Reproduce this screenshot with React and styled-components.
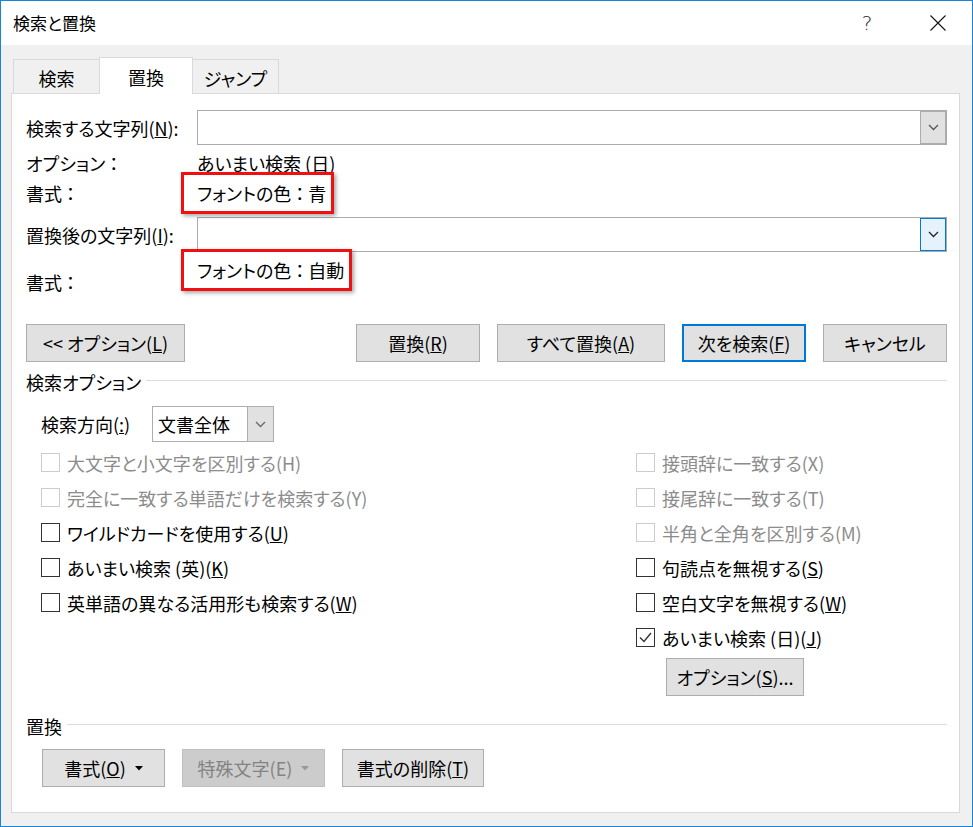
import React from "react";
import styled, { createGlobalStyle } from "styled-components";

const GlobalStyle = createGlobalStyle`
  html, body {
    margin: 0;
    padding: 0;
    background: #ffffff;
  }
  body {
    font-family: "Noto Sans CJK JP", "Noto Sans", sans-serif;
    font-size: 18px;
    font-feature-settings: "palt";
    color: #000;
  }
  * {
    box-sizing: border-box;
  }
`;

const Window = styled.div`
  width: 973px;
  height: 827px;
  border: 1px solid #1883d7;
  background: #f0f0f0;
  display: flex;
  flex-direction: column;
`;

const TitleBar = styled.div`
  height: 44px;
  flex-shrink: 0;
  background: #fff;
  display: flex;
  align-items: center;
  padding-left: 12px;
`;

const Title = styled.span`
  font-size: 17px;
  line-height: 24px;
`;

const TitleControls = styled.div`
  margin-left: auto;
  display: flex;
  align-items: center;
  gap: 25px;
  padding-right: 11px;
`;

const TitleButton = styled.div`
  width: 46px;
  height: 44px;
  display: flex;
  align-items: center;
  justify-content: center;
  color: #222;
  font-family: "DejaVu Sans", sans-serif;
  font-size: 20px;
  font-weight: 300;
`;

const TabRow = styled.div`
  height: 49px;
  flex-shrink: 0;
  display: flex;
  align-items: flex-end;
  padding: 12px 0 0 12px;
  margin-bottom: -1px;
  position: relative;
  z-index: 1;
`;

const Tab = styled.div`
  height: ${(p) => (p.$active ? 37 : 34)}px;
  width: ${(p) => p.$w}px;
  margin-bottom: ${(p) => (p.$active ? 0 : 1)}px;
  background: ${(p) => (p.$active ? "#fff" : "#f0f0f0")};
  border-top: 1px solid #d9d9d9;
  border-left: ${(p) => (p.$noLeft ? "none" : "1px solid #d9d9d9")};
  border-right: ${(p) => (p.$noRight ? "none" : "1px solid #d9d9d9")};
  display: flex;
  align-items: center;
  justify-content: center;
  padding-top: 2px;
  line-height: 24px;
`;

const Panel = styled.div`
  flex: 1;
  margin: 0 12px 13px 10px;
  background: #fff;
  border: 1px solid #d9d9d9;
  padding: 0 12px 0 14px;
  display: flex;
  flex-direction: column;
`;

/* full-width colon, a little tighter than the default em box */
const Colon = styled.span`
  padding: 0 4px;
`;

const ComboRow = styled.div`
  display: flex;
  align-items: center;
  height: 35px;
  margin-top: ${(p) => p.$mt}px;
`;

const Label = styled.div`
  width: 171px;
  flex-shrink: 0;
  line-height: 24px;
  white-space: nowrap;
  margin-top: ${(p) => p.$mt || 0}px;
`;

const Combo = styled.div`
  flex: 1;
  height: 35px;
  border: 1px solid #ababab;
  background: #fff;
  display: flex;
  justify-content: flex-end;
`;

const DropButton = styled.div`
  width: 26px;
  height: 100%;
  border: 1px solid ${(p) => (p.$focused ? "#0078d7" : "#adadad")};
  background: ${(p) => (p.$focused ? "#e5f1fb" : "#e1e1e1")};
  display: flex;
  align-items: center;
  justify-content: center;
`;

const InfoRow = styled.div`
  display: flex;
  align-items: ${(p) => (p.$top ? "flex-start" : "center")};
  height: ${(p) => p.$h || 30}px;
  margin-top: ${(p) => p.$mt || 0}px;
`;

const Value = styled.div`
  line-height: 24px;
  white-space: nowrap;
  margin-top: ${(p) => p.$mt || 0}px;
`;

const Highlight = styled.span`
  display: inline-block;
  position: relative;
  line-height: 24px;

  &::after {
    content: "";
    position: absolute;
    left: -16px;
    right: -8px;
    top: -9px;
    bottom: -9px;
    border: 3px solid #f01010;
    box-shadow: 2px 2px 4px rgba(0, 0, 0, 0.35);
  }
`;

const ButtonRow = styled.div`
  display: flex;
  justify-content: space-between;
  align-items: center;
  margin-top: ${(p) => p.$mt}px;
  padding-left: ${(p) => p.$indent || 0}px;
`;

const ButtonGroup = styled.div`
  display: flex;
  gap: 17px;
`;

const Button = styled.button`
  width: ${(p) => p.$w}px;
  height: 38px;
  padding: 0;
  margin: 0;
  border: ${(p) =>
    p.$primary
      ? "2px solid #0078d7"
      : p.$disabled
      ? "1px solid #bfbfbf"
      : "1px solid #adadad"};
  background: ${(p) => (p.$disabled ? "#cccccc" : "#e1e1e1")};
  color: ${(p) => (p.$disabled ? "#838383" : "#000")};
  font: inherit;
  font-size: 18px;
  line-height: 24px;
  display: flex;
  align-items: center;
  justify-content: center;
  gap: 9px;
  white-space: nowrap;
`;

const SectionHeader = styled.div`
  display: flex;
  align-items: center;
  gap: 5px;
  height: 24px;
  margin-top: ${(p) => p.$mt}px;
  line-height: 24px;
  white-space: nowrap;

  &::after {
    content: "";
    flex: 1;
    height: 1px;
    background: #dcdcdc;
    margin-top: -4px;
  }
`;

const DirectionRow = styled.div`
  display: flex;
  align-items: center;
  height: 36px;
  margin-top: 12px;
  padding-left: 15px;
  line-height: 24px;
`;

const DirectionLabel = styled.span`
  width: 111px;
  flex-shrink: 0;
  white-space: nowrap;
`;

const Select = styled.div`
  width: 122px;
  height: 36px;
  border: 1px solid #adadad;
  display: flex;
  align-items: center;
  justify-content: space-between;
  padding-left: 5px;
  background: #fff;
`;

const SelectArrow = styled.div`
  width: 26px;
  height: 100%;
  background: #e1e1e1;
  border-left: 1px solid #adadad;
  display: flex;
  align-items: center;
  justify-content: center;
`;

const Options = styled.div`
  display: flex;
  margin-top: 3px;
  padding-left: 15px;
`;

const Column = styled.div`
  display: flex;
  flex-direction: column;
  width: ${(p) => (p.$w ? `${p.$w}px` : "auto")};
`;

const CheckRow = styled.div`
  display: flex;
  align-items: center;
  height: 35px;
  gap: 7px;
  color: ${(p) => (p.$disabled ? "#8c8c8c" : "#000")};
  line-height: 24px;
  white-space: nowrap;
`;

const Box = styled.span`
  width: 19px;
  height: 19px;
  flex-shrink: 0;
  border: 1px solid ${(p) => (p.$disabled ? "#cccccc" : "#333333")};
  background: #fff;
  display: flex;
  align-items: center;
  justify-content: center;
`;

const OptionButtonWrap = styled.div`
  margin-top: 3px;
  padding-left: 30px;
`;

const Chevron = ({ color = "#333" }) => (
  <svg width="11" height="7" viewBox="0 0 11 7">
    <polyline points="1,1 5.5,5.5 10,1" fill="none" stroke={color} strokeWidth="1.3" />
  </svg>
);

const Caret = ({ color = "#000" }) => (
  <svg width="8" height="5" viewBox="0 0 8 5">
    <polygon points="0,0 8,0 4,4.5" fill={color} />
  </svg>
);

const CloseIcon = () => (
  <svg width="16" height="16" viewBox="0 0 16 16">
    <path d="M0.5 0.5 L15.5 15.5 M15.5 0.5 L0.5 15.5" stroke="#111" strokeWidth="1.1" fill="none" />
  </svg>
);

const Check = ({ label, disabled, checked }) => (
  <CheckRow $disabled={disabled}>
    <Box $disabled={disabled}>
      {checked && (
        <svg width="15" height="15" viewBox="0 0 15 15">
          <polyline points="2,7.5 6,11.5 13,3" fill="none" stroke="#333" strokeWidth="1.4" />
        </svg>
      )}
    </Box>
    <span>{label}</span>
  </CheckRow>
);

export default function App() {
  return (
    <>
      <GlobalStyle />
      <Window>
        <TitleBar>
          <Title>検索と置換</Title>
          <TitleControls>
            <TitleButton>?</TitleButton>
            <TitleButton>
              <CloseIcon />
            </TitleButton>
          </TitleControls>
        </TitleBar>

        <TabRow>
          <Tab $w={86} $noRight>検索</Tab>
          <Tab $w={94} $active>置換</Tab>
          <Tab $w={86} $noLeft>ジャンプ</Tab>
        </TabRow>

        <Panel>
          <ComboRow $mt={16}>
            <Label>
              検索する文字列(<u>N</u>):
            </Label>
            <Combo>
              <DropButton>
                <Chevron color="#555" />
              </DropButton>
            </Combo>
          </ComboRow>

          <InfoRow $mt={3}>
            <Label>
              オプション<Colon>：</Colon>
            </Label>
            <Value>あいまい検索 (日)</Value>
          </InfoRow>
          <InfoRow>
            <Label>
              書式<Colon>：</Colon>
            </Label>
            <Value>
              <Highlight>
                フォントの色<Colon>：</Colon>青
              </Highlight>
            </Value>
          </InfoRow>

          <ComboRow $mt={9}>
            <Label>
              置換後の文字列(<u>I</u>):
            </Label>
            <Combo>
              <DropButton $focused>
                <Chevron color="#222" />
              </DropButton>
            </Combo>
          </ComboRow>

          <InfoRow $top $h={44}>
            <Label $mt={18}>
              書式<Colon>：</Colon>
            </Label>
            <Value $mt={6}>
              <Highlight>
                フォントの色<Colon>：</Colon>自動
              </Highlight>
            </Value>
          </InfoRow>

          <ButtonRow $mt={28}>
            <Button $w={159}>
              <span>
                {"<< オプション("}
                <u>L</u>)
              </span>
            </Button>
            <ButtonGroup>
              <Button $w={124}>
                <span>
                  置換(<u>R</u>)
                </span>
              </Button>
              <Button $w={168}>
                <span>
                  すべて置換(<u>A</u>)
                </span>
              </Button>
              <Button $w={124} $primary>
                <span>
                  次を検索(<u>F</u>)
                </span>
              </Button>
              <Button $w={124}>
                <span>キャンセル</span>
              </Button>
            </ButtonGroup>
          </ButtonRow>

          <SectionHeader $mt={8}>検索オプション</SectionHeader>

          <DirectionRow>
            <DirectionLabel>
              検索方向(<u>:</u>)
            </DirectionLabel>
            <Select>
              <span>文書全体</span>
              <SelectArrow>
                <Chevron color="#666" />
              </SelectArrow>
            </Select>
          </DirectionRow>

          <Options>
            <Column $w={595}>
              <Check disabled label="大文字と小文字を区別する(H)" />
              <Check disabled label="完全に一致する単語だけを検索する(Y)" />
              <Check label={<>ワイルドカードを使用する(<u>U</u>)</>} />
              <Check label={<>あいまい検索 (英)(<u>K</u>)</>} />
              <Check label={<>英単語の異なる活用形も検索する(<u>W</u>)</>} />
            </Column>
            <Column>
              <Check disabled label="接頭辞に一致する(X)" />
              <Check disabled label="接尾辞に一致する(T)" />
              <Check disabled label="半角と全角を区別する(M)" />
              <Check label={<>句読点を無視する(<u>S</u>)</>} />
              <Check label={<>空白文字を無視する(<u>W</u>)</>} />
              <Check checked label={<>あいまい検索 (日)(<u>J</u>)</>} />
              <OptionButtonWrap>
                <Button $w={138}>
                  <span>
                    オプション(<u>S</u>)...
                  </span>
                </Button>
              </OptionButtonWrap>
            </Column>
          </Options>

          <SectionHeader $mt={18}>置換</SectionHeader>

          <ButtonRow $mt={11} $indent={16}>
            <ButtonGroup>
              <Button $w={123}>
                <span>
                  書式(<u>O</u>)
                </span>
                <Caret />
              </Button>
              <Button $w={143} $disabled>
                <span>特殊文字(E)</span>
                <Caret color="#999" />
              </Button>
              <Button $w={142}>
                <span>
                  書式の削除(<u>T</u>)
                </span>
              </Button>
            </ButtonGroup>
          </ButtonRow>
        </Panel>
      </Window>
    </>
  );
}
